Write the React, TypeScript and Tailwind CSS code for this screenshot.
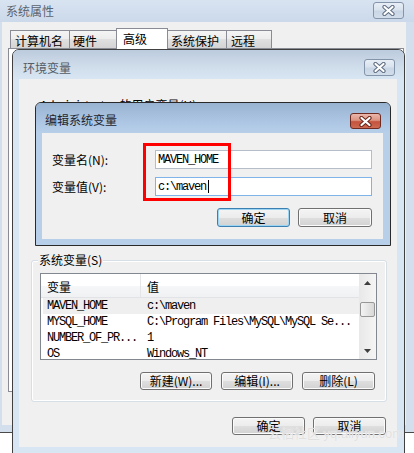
import React from "react";

const cjk = "font-['Noto_Sans_CJK_SC',sans-serif]";
const mono = "font-['Liberation_Mono',monospace] text-[12px] tracking-[-1.2px]";

const rows = [
  ["MAVEN_HOME", "c:\\maven"],
  ["MYSQL_HOME", "C:\\Program Files\\MySQL\\MySQL Se..."],
  ["NUMBER_OF_PR...", "1"],
  ["OS", "Windows_NT"],
];

function CloseX({ active }: { active?: boolean }) {
  return (
    <svg width="13" height="11" viewBox="0 0 13 11">
      <path d="M2.5 2 L10.5 9 M10.5 2 L2.5 9" stroke={active ? "#6a2418" : "#5d6c80"} strokeWidth="4.2" strokeLinecap="round" />
      <path d="M2.5 2 L10.5 9 M10.5 2 L2.5 9" stroke="#ffffff" strokeWidth="2.2" strokeLinecap="round" />
    </svg>
  );
}

function CloseButton({ active }: { active?: boolean }) {
  if (active) {
    return (
      <div className="flex h-[16px] w-[31px] items-center justify-center rounded-[3px] border border-[#6e2b22] bg-[linear-gradient(#eab7aa_0%,#dc9483_45%,#c5533d_55%,#cc6a52_100%)]">
        <CloseX active />
      </div>
    );
  }
  return (
    <div className="flex h-[17px] w-[31px] items-center justify-center rounded-[3px] border border-[#8494a9] bg-[linear-gradient(#e8eef6_0%,#d9e3ee_45%,#c9d6e5_55%,#d3deeb_100%)]">
      <CloseX />
    </div>
  );
}

function WinButton({ label, size, def }: { label: string; size: string; def?: boolean }) {
  return (
    <div
      className={
        def
          ? `flex items-center justify-center rounded-[3px] border border-[#3c7fb1] bg-[linear-gradient(#f4f4f4_0%,#ececec_50%,#dfdfdf_50%,#d2d2d2_100%)] shadow-[inset_0_0_0_1px_#9cd4f3] text-[12px] leading-none text-black ${size}`
          : `flex items-center justify-center rounded-[3px] border border-[#707070] bg-[linear-gradient(#f4f4f4_0%,#ececec_50%,#dfdfdf_50%,#d2d2d2_100%)] shadow-[inset_0_0_0_1px_#fbfbfb] text-[12px] leading-none text-black ${size}`
      }
    >
      {label}
    </div>
  );
}

const App = () => {
  return (
    <div className={`relative h-[453px] w-[414px] overflow-hidden bg-white ${cjk} text-[12px] text-black`}>
      {/* OUTER WINDOW */}
      <div className="absolute left-0 top-0 h-[433px] w-[414px] border-b border-[#4a4a4a] bg-[#d3dfed]">
        <div className="flex h-[22px] items-start justify-between bg-[linear-gradient(#d9e4f1,#cbd9ea)] pl-[6px] pr-[10px]">
          <span className="pt-[3px] leading-[16px] text-[#5b6470]">系统属性</span>
          <div className="pt-[2px]">
            <CloseButton />
          </div>
        </div>
        <div className="ml-[2px] h-[403px] w-[404px] bg-[#f0f0f0] pt-[6px]">
          <div className="flex h-[20px] items-end pl-[8px]">
            <div className="h-[18px] w-[60px] border-x border-t border-[#898c95] bg-[linear-gradient(#f4f4f4,#ececec_50%,#e0e0e0_50%,#d4d4d4)] pl-[4px] leading-[19px]">计算机名</div>
            <div className="-ml-px h-[18px] w-[48px] border-x border-t border-[#898c95] bg-[linear-gradient(#f4f4f4,#ececec_50%,#e0e0e0_50%,#d4d4d4)] pl-[3px] leading-[19px]">硬件</div>
            <div className="relative z-10 -mb-px -ml-px h-[21px] w-[52px] border-x border-t border-[#898c95] bg-white pl-[6px] leading-[20px]">高级</div>
            <div className="-ml-px h-[18px] w-[60px] border-x border-t border-[#898c95] bg-[linear-gradient(#f4f4f4,#ececec_50%,#e0e0e0_50%,#d4d4d4)] pl-[3px] leading-[19px]">系统保护</div>
            <div className="-ml-px h-[18px] w-[46px] border-x border-t border-[#898c95] bg-[linear-gradient(#f4f4f4,#ececec_50%,#e0e0e0_50%,#d4d4d4)] pl-[4px] leading-[19px]">远程</div>
          </div>
          <div className="ml-[6px] h-[344px] w-[396px] border border-[#898c95] bg-white" />
        </div>
      </div>

      {/* ENVIRONMENT VARIABLES WINDOW */}
      <div className="absolute left-[12px] top-[49px] h-[420px] w-[393px] rounded-t-[7px] border border-[#404040] bg-[#d8e5f3]">
        <div className="flex h-[29px] items-start justify-between rounded-t-[6px] bg-[linear-gradient(#bccbdd,#d0ddeb_60%,#d8e5f3)] pl-[10px] pr-[9px]">
          <span className="pt-[11px] leading-[14px] text-[#545c66]">环境变量</span>
          <div className="pt-[9px]">
            <CloseButton />
          </div>
        </div>
        <div className="ml-[6px] h-[368px] w-[378px] bg-[#f0f0f0] pt-[19px]">
          <div className="pl-[21px] leading-[14px]">Administrator 的用户变量(U)</div>

          {/* SYSTEM VARIABLES GROUP */}
          <div className="relative ml-[12px] mt-[148px] h-[142px] w-[356px] rounded-[3px] border border-[#d5dfe5] pl-[8px] pt-[12px] shadow-[inset_0_0_0_1px_#ffffff]">
            <span className="absolute left-[6px] top-[-8px] bg-[#f0f0f0] px-[1px] leading-[14px]">系统变量(S)</span>
            <div className="flex h-[87px] w-[337px] border border-[#828790] bg-white">
              <div className="flex-1 overflow-hidden">
                <div className="flex h-[24px] border-b border-[#e2e3e6] bg-[linear-gradient(#ffffff,#ffffff_50%,#f6f7f9_50%,#f0f1f3)]">
                  <div className="w-[100px] border-r border-[#e3e5e9] pl-[6px] leading-[25px]">变量</div>
                  <div className="flex-1 pl-[6px] leading-[25px]">值</div>
                </div>
                {rows.map((r, i) => (
                  <div key={r[0]} className={i === 0 ? "ml-[2px] flex h-[16px] bg-[#efefef]" : "ml-[2px] flex h-[16px]"}>
                    <div className={`w-[98px] whitespace-nowrap pl-[4px] leading-[16px] ${mono}`}>{r[0]}</div>
                    <div className={`flex-1 whitespace-nowrap pl-[6px] leading-[16px] ${mono}`}>{r[1]}</div>
                  </div>
                ))}
              </div>
              <div className="flex w-[17px] flex-col bg-[linear-gradient(90deg,#e8e8e8,#f5f5f5)]">
                <div className="flex h-[17px] items-center justify-center">
                  <svg width="7" height="4" viewBox="0 0 7 4">
                    <polygon points="0,4 3.5,0 7,4" fill="#3e3e3e" />
                  </svg>
                </div>
                <div className="mx-auto mt-[11px] h-[15px] w-[15px] rounded-[2px] border border-[#979797] bg-[linear-gradient(90deg,#f4f4f4,#e6e6e6_50%,#d8d8d8)]" />
                <div className="mt-auto flex h-[17px] items-center justify-center">
                  <svg width="7" height="4" viewBox="0 0 7 4">
                    <polygon points="0,0 7,0 3.5,4" fill="#3e3e3e" />
                  </svg>
                </div>
              </div>
            </div>
            <div className="mt-[12px] flex justify-end gap-[9px] pr-[11px]">
              <WinButton label="新建(W)..." size="h-[18px] w-[72px]" />
              <WinButton label="编辑(I)..." size="h-[18px] w-[72px]" />
              <WinButton label="删除(L)" size="h-[18px] w-[73px]" />
            </div>
          </div>

          <div className="mt-[15px] flex justify-end gap-[8px] pr-[11px]">
            <WinButton label="确定" size="h-[18px] w-[73px]" />
            <WinButton label="取消" size="h-[18px] w-[73px]" />
          </div>
        </div>
      </div>

      {/* EDIT SYSTEM VARIABLE DIALOG */}
      <div className="absolute left-[35px] top-[102px] h-[144px] w-[356px] rounded-t-[6px] border border-[#2a2a2a] bg-[#b7cfe9]">
        <div className="flex h-[30px] items-start justify-between rounded-t-[5px] bg-[linear-gradient(#98b3d2,#acc5e2_60%,#b7cfe9)] pl-[9px] pr-[9px]">
          <span className="pt-[10px] leading-[14px] text-[#1e2530]">编辑系统变量</span>
          <div className="pt-[10px]">
            <CloseButton active />
          </div>
        </div>
        <div className="relative ml-[6px] h-[106px] w-[341px] bg-[#f0f0f0] pt-[17px]">
          <div className="flex h-[19px] items-center">
            <span className="w-[113px] pl-[10px] leading-[14px]">变量名(N):</span>
            <div className={`flex h-[19px] w-[217px] items-center border border-[#b4bdc8] bg-white pl-[2px] ${mono}`}>MAVEN_HOME</div>
          </div>
          <div className="mt-[8px] flex h-[19px] items-center">
            <span className="w-[113px] pl-[10px] leading-[14px]">变量值(V):</span>
            <div className={`flex h-[19px] w-[217px] items-center border border-[#7eb4ea] bg-white pl-[2px] ${mono}`}>
              c:\maven
              <span className="ml-[2px] h-[13px] w-px bg-black" />
            </div>
          </div>
          <div className="mt-[12px] flex justify-end gap-[8px] pr-[11px]">
            <WinButton label="确定" size="h-[19px] w-[73px]" def />
            <WinButton label="取消" size="h-[19px] w-[74px]" />
          </div>
          {/* RED ANNOTATION */}
          <div className="absolute left-[101px] top-[10px] h-[58px] w-[88px] border-[3px] border-[#ff0000]" />
        </div>
      </div>

      {/* WATERMARK */}
      <div className="absolute left-[268px] top-[427px] whitespace-nowrap font-['Liberation_Sans','Noto_Sans_CJK_SC',sans-serif] text-[13px] leading-[14px] text-[#e0e0e0] [text-shadow:0_0_1px_#ffffff]">
        云栖社区 yq.aliyun.com
      </div>
    </div>
  );
};

export default App;
